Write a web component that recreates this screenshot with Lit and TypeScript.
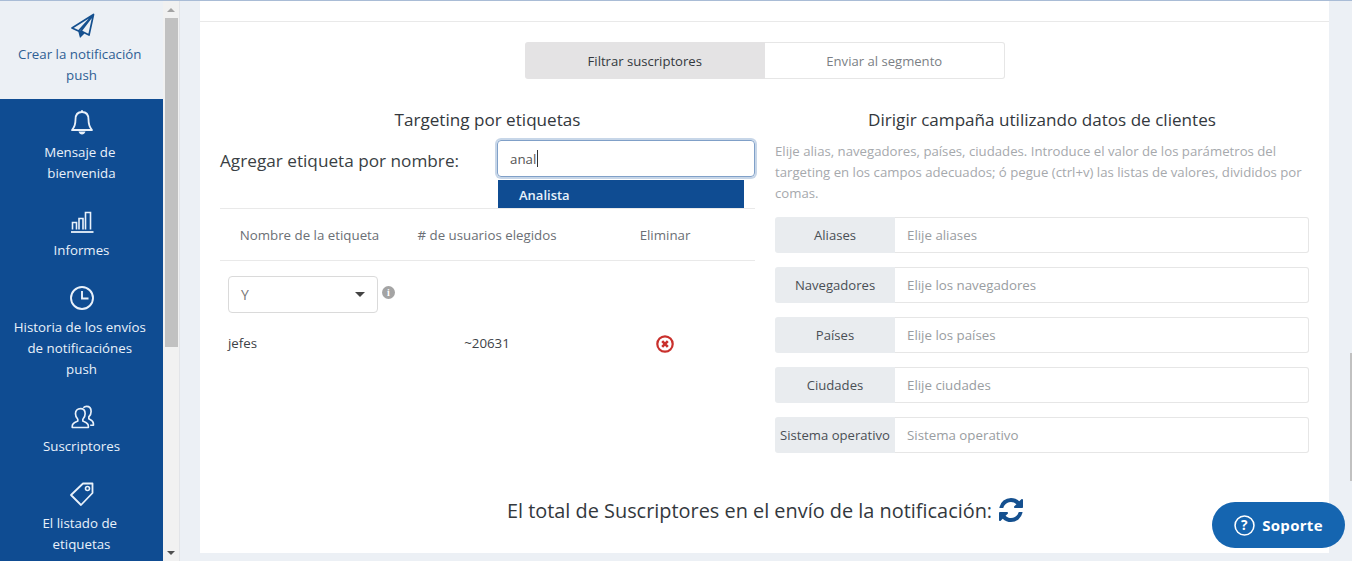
import { LitElement, html, css, svg } from "lit";
import { customElement } from "lit/decorators.js";

const icons: Record<string, unknown> = {
  plane: svg`<path d="M25.500 3.500 4 17l6.500 3L25.500 3.500 13 20l8 4L25.500 3.500Z" fill="none" stroke="currentColor" stroke-width="1.700" stroke-linejoin="round"/><path d="M10 19.500 12 27l4.500-4.500-3.500-3Z" fill="currentColor"/>`,
  bell: svg`<path d="M14 3c-4.600 0-6.500 3.500-6.500 7.500 0 5-1.200 8-3.500 10.500h20c-2.300-2.500-3.500-5.500-3.500-10.500C20.500 6.500 18.600 3 14 3Z" fill="none" stroke="currentColor" stroke-width="1.800" stroke-linejoin="round"/><path d="M13 1.200h2V3h-2ZM10.500 22.500h7c-.6 2-2 3-3.500 3s-2.900-1-3.500-3Z" fill="currentColor"/>`,
  bars: svg`<path d="M4.500 21.500V14.500h4v7M11 21.500V10.500h4v11M17.500 21.500V4.500h5v17" fill="none" stroke="currentColor" stroke-width="1.600"/><path d="M3 24h22.500" stroke="currentColor" stroke-width="1.800"/>`,
  clock: svg`<circle cx="14" cy="14" r="11" fill="none" stroke="currentColor" stroke-width="1.900"/><path d="M14 7v7.500h6.500" fill="none" stroke="currentColor" stroke-width="1.900"/>`,
  users: svg`<g transform="translate(1.500 1) scale(.92)"><path d="M12 4c3.500 0 5 2.500 5 5.500 0 2.500-1 4.500-2.500 6v2c2 1.200 6 1.800 6 5.500v1.500H3v-1.500c0-3.700 4-4.300 6-5.500v-2C7.500 14 6.500 12 6.500 9.500 6.500 6.500 8.500 4 12 4Z" fill="none" stroke="currentColor" stroke-width="1.800" stroke-linejoin="round"/><path d="M15 3c1-1 2-1.500 3.500-1.500 3.500 0 5 2.500 5 5.500 0 2.500-1 4.500-2.500 6v2c2 1.200 5 1.800 5 5.300V22h-3.500" fill="none" stroke="currentColor" stroke-width="1.800" stroke-linejoin="round"/></g>`,
  tag: svg`<path d="M15 3.500h9.500V13L13 25 3 15 15 3.500Z" fill="none" stroke="currentColor" stroke-width="1.800" stroke-linejoin="round"/><circle cx="19.500" cy="8.500" r="2" fill="none" stroke="currentColor" stroke-width="1.600"/>`,
};

const nav = [
  { icon: "plane", lines: "Crear la notificación push", active: true, h: 98 },
  { icon: "bell", lines: "Mensaje de bienvenida", h: 99 },
  { icon: "bars", lines: "Informes", h: 76, single: true },
  { icon: "clock", lines: "Historia de los envíos de notificaciónes push", h: 120 },
  { icon: "users", lines: "Suscriptores", h: 76, single: true },
  { icon: "tag", lines: "El listado de \netiquetas", h: 98 },
];

const fields = [
  ["Aliases", "Elije aliases"],
  ["Navegadores", "Elije los navegadores"],
  ["Países", "Elije los países"],
  ["Ciudades", "Elije ciudades"],
  ["Sistema operativo", "Sistema operativo"],
];

@customElement("app-root")
export class AppRoot extends LitElement {
  static styles = css`
    :host {
      display: flex;
      box-sizing: border-box;
      width: 1352px;
      height: 561px;
      overflow: hidden;
      position: relative;
      background: #ecf0f5;
      border-top: 1px solid #a9bcd6;
      font-family: "Open Sans", "Noto Sans", sans-serif;
      font-size: 13.300px;
      color: #333;
    }
    * { box-sizing: border-box; }
    .side { display: flex; flex: none; width: 180px; height: 560px; border-right: 1px solid #e2e4e8; }
    .nav { width: 163px; background: #0f4c92; overflow: hidden; flex: none; }
    .item {
      display: flex; flex-direction: column; align-items: center;
      padding: 10px 13.600px 0; color: #e9f1fa; text-align: center; line-height: 21px; font-size: 13.300px;
      white-space: break-spaces;
    }
    .item svg { width: 28px; height: 28px; margin-bottom: 5px; flex: none; }
    .item.single svg { margin-bottom: 4px; }
    .item.active { background: #ecf0f5; color: #2f5f94; }
    .item.active svg { color: #15508f; }
    .scroll { position: relative; flex: 1; background: #f1f1f1; display: flex; flex-direction: column; align-items: center; }
    .arrow-up, .arrow-down { height: 17px; flex: none; display: flex; align-items: center; justify-content: center; }
    .arrow-up::before { content: ""; border: 4px solid transparent; border-top: 0; border-bottom: 4px solid #a3a3a3; }
    .arrow-down::before { content: ""; border: 4px solid transparent; border-bottom: 0; border-top: 4px solid #505050; }
    .thumb { width: 13px; height: 329px; background: #c1c1c1; flex: none; }
    .spacer { flex: 1; }
    .main { flex: 1; padding: 0 23px 8px 20px; display: flex; min-width: 0; }
    .card { flex: 1; background: #fff; display: flex; flex-direction: column; min-width: 0; }
    .top { height: 21px; border-bottom: 1px solid #e9e9e9; flex: none; }
    .tabs { display: flex; width: 480px; height: 37px; margin: 20px 0 0 325px; flex: none; }
    .tab { flex: 1; display: flex; align-items: center; justify-content: center; font-size: 13.100px; }
    .tab.on { background: #e4e3e4; color: #33383d; border-radius: 3px 0 0 3px; }
    .tab.off { border: 1px solid #e6e6e6; border-left: 0; color: #7b7f85; border-radius: 0 3px 3px 0; }
    .cols { display: grid; grid-template-columns: 535px 534px; gap: 20px; padding: 0 20px; margin-top: 29px; flex: none; }
    .title { text-align: center; color: #33383d; line-height: 24px; font-size: 17.100px; }
    .add { display: flex; align-items: center; justify-content: space-between; margin-top: 8px; height: 37px; position: relative; }
    .add label { font-size: 17.200px; color: #3a3f44; padding-top: 3px; }
    .box {
      width: 258px; height: 37px; border: 1px solid #80a0c8; border-radius: 4px;
      box-shadow: 0 0 0 2px #c7d6e8; display: flex; align-items: center; padding-left: 12px; font-size: 13.300px; color: #555;
    }
    .caret { width: 1px; height: 17px; background: #333; margin-left: 1px; }
    .drop {
      position: absolute; left: 278px; top: 40px; width: 246px; height: 28px; background: #0f4c92;
      color: #e8f2fb; font-weight: 600; font-size: 13px; padding: 5px 0 0 21px; line-height: 20px; z-index: 2;
    }
    .rule { height: 1px; background: #e9e9e9; }
    .add-rule { margin-top: 31px; }
    .row { display: grid; grid-template-columns: 179px 176px 1fr; align-items: center; text-align: center; }
    .head { height: 51px; color: #6b6f75; font-size: 13.300px; }
    .logic { display: flex; margin: 15px 0 0 8px; align-items: flex-start; gap: 4px; }
    .select {
      width: 150px; height: 37px; border: 1px solid #dadada; border-radius: 4px;
      display: flex; align-items: center; justify-content: space-between; padding: 0 12px; color: #777; font-size: 14px;
    }
    .select i { border: 5px solid transparent; border-bottom: 0; border-top: 5px solid #444; }
    .info { width: 13px; height: 13px; margin: 10px 0 0 0; border-radius: 50%; background: #a4a4a4; color: #fff; font: 700 10px/13px "Liberation Serif", serif; text-align: center; }
    .data { margin-top: 18px; height: 24px; font-size: 13.300px; color: #3d4247; }
    .data span:first-child { text-align: left; padding-left: 8px; }
    .data svg { width: 18px; height: 18px; display: block; margin: 1px auto 0; }
    .desc { color: #a6a9ad; font-size: 13.200px; line-height: 21px; margin: 9px 0 0; }
    .group { display: flex; height: 36px; margin-top: 14px; }
    .desc + .group { margin-top: 13px; }
    .pre {
      width: 120px; flex: none; background: #e9ecef; color: #494f55; font-size: 13.100px; border-radius: 3px 0 0 3px;
      display: flex; align-items: center; justify-content: center; white-space: nowrap;
    }
    .ph {
      flex: 1; border: 1px solid #e6e6e6; border-left: 0; border-radius: 0 3px 3px 0; color: #999da1; font-size: 13.300px;
      display: flex; align-items: center; padding-left: 12px;
    }
    .total { display: flex; align-items: center; justify-content: center; gap: 5px; margin-top: 42px; font-size: 19.900px; color: #33383d; height: 30px; padding-left: 3px; }
    .total svg { width: 28px; height: 28px; color: #15508f; }
    .support {
      position: absolute; left: 1212px; top: 501px; width: 133px; height: 46px; border-radius: 23px; background: #1565b0;
      color: #fff; display: flex; align-items: center; justify-content: center; gap: 7px; font-weight: 700; font-size: 15px; letter-spacing: .3px;
    }
    .support svg { width: 21px; height: 21px; flex: none; }
    .page-thumb { position: absolute; right: 0; top: 352px; width: 2px; height: 128px; background: #c1c1c1; }
  `;

  render() {
    return html`
      <div class="side">
        <div class="nav">
          ${nav.map(
            (n) => html`<div class="item ${n.active ? "active" : ""} ${n.single ? "single" : ""}" style="height:${n.h}px">
              <svg viewBox="0 0 28 28">${icons[n.icon]}</svg>
              <div>${n.lines}</div>
            </div>`
          )}
        </div>
        <div class="scroll">
          <div class="arrow-up"></div>
          <div class="thumb"></div>
          <div class="spacer"></div>
          <div class="arrow-down"></div>
        </div>
      </div>
      <div class="main">
        <div class="card">
          <div class="top"></div>
          <div class="tabs">
            <div class="tab on">Filtrar suscriptores</div>
            <div class="tab off">Enviar al segmento</div>
          </div>
          <div class="cols">
            <div class="left">
              <div class="title">Targeting por etiquetas</div>
              <div class="add">
                <label>Agregar etiqueta por nombre:</label>
                <div class="box">anal<span class="caret"></span></div>
                <div class="drop">Analista</div>
              </div>
              <div class="rule add-rule"></div>
              <div class="row head"><span>Nombre de la etiqueta</span><span># de usuarios elegidos</span><span>Eliminar</span></div>
              <div class="rule"></div>
              <div class="logic">
                <div class="select">Y<i></i></div>
                <div class="info">i</div>
              </div>
              <div class="row data">
                <span>jefes</span><span>~20631</span>
                <span><svg viewBox="0 0 18 18"><circle cx="9" cy="9" r="7.700" fill="#fff" stroke="#c9302c" stroke-width="2.200"/><path d="M6.200 6.200l5.600 5.600M11.800 6.200l-5.600 5.600" stroke="#c9302c" stroke-width="2.600"/></svg></span>
              </div>
            </div>
            <div class="right">
              <div class="title">Dirigir campaña utilizando datos de clientes</div>
              <p class="desc">Elije alias, navegadores, países, ciudades. Introduce el valor de los parámetros del targeting en los campos adecuados; ó pegue (ctrl+v) las listas de valores, divididos por comas.</p>
              ${fields.map(
                ([a, b]) => html`<div class="group"><div class="pre">${a}</div><div class="ph">${b}</div></div>`
              )}
            </div>
          </div>
          <div class="total">
            <span>El total de Suscriptores en el envío de la notificación:</span>
            <svg viewBox="0 0 1792 1792"><path fill="currentColor" d="M1639 1056q0 5-1 7-64 268-268 434.500t-478 166.500q-146 0-282.500-55t-243.500-157l-129 129q-19 19-45 19t-45-19-19-45v-448q0-26 19-45t45-19h448q26 0 45 19t19 45-19 45l-137 137q71 66 161 102t187 36q134 0 250-65t186-179q11-17 53-117 8-23 30-23h192q13 0 22.500 9.500t9.500 22.500zm25-800v448q0 26-19 45t-45 19h-448q-26 0-45-19t-19-45 19-45l138-138q-148-137-349-137-134 0-250 65t-186 179q-11 17-53 117-8 23-30 23h-199q-13 0-22.500-9.500t-9.500-22.500v-7q65-268 270-434.500t480-166.500q146 0 284 55.500t245 156.500l130-129q19-19 45-19t45 19 19 45z"/></svg>
          </div>
        </div>
      </div>
      <div class="support">
        <svg viewBox="0 0 20 20"><circle cx="10" cy="10" r="9" fill="none" stroke="#fff" stroke-width="1.500"/><text x="10" y="14.500" text-anchor="middle" fill="#fff" font-size="13" font-weight="700" font-family="Open Sans">?</text></svg>
        <span>Soporte</span>
      </div>
      <div class="page-thumb"></div>
    `;
  }
}
